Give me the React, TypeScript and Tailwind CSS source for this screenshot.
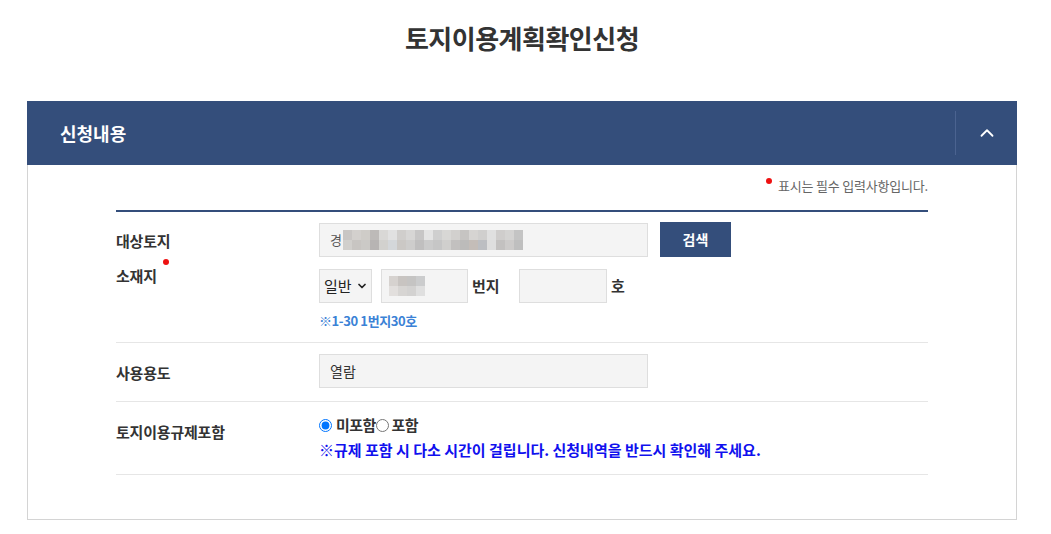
import { ChevronDown, ChevronUp } from 'lucide-react';

const font = { fontFamily: '"Noto Sans CJK KR", "Noto Sans", sans-serif' };

// 개인정보 모자이크 (블러 처리된 주소)
const addrBlocks = [
  ['#c9c6c4', '#d3d0cd', '#cfccc8', '#bdbab8', '#d9d8d6', '#e1e1e1', '#d0cecc', '#d7d6d5', '#c7c6c6', '#e4e4e4', '#cfcfcf', '#d8d7d5', '#d2d0ce', '#c6c4c2', '#d6d4d2', '#d0cfce', '#e0e0e0', '#cfcdcc', '#d4d3d2', '#c4c4c4'],
  ['#d1cfcc', '#c8c5c2', '#cbc9c6', '#b7b4b3', '#d2d1ce', '#d4d7da', '#cbc8c5', '#cecdcc', '#c0bfbf', '#cbcbcb', '#c6c6c6', '#d0cfcd', '#c2c0bf', '#bcbbba', '#c4bdb8', '#bcbec2', '#dedede', '#c3c1c0', '#cdcbca', '#bfbfbf'],
];
const lotBlocks = [
  ['#d6d2cf', '#c8c4c1', '#c5c4c3', '#cbcccd'],
  ['#e2dfdd', '#d7d5d3', '#d3d2d1', '#dfdfdf'],
];

function Mosaic({ rows, size }: { rows: string[][]; size: string }) {
  return (
    <div className="flex flex-col">
      {rows.map((r, i) => (
        <div key={i} className="flex">
          {r.map((c, j) => (
            <div key={j} className={size} style={{ backgroundColor: c }} />
          ))}
        </div>
      ))}
    </div>
  );
}

export default function App() {
  return (
    <div className="min-h-screen bg-white text-[#333]" style={font}>
      {/* Title */}
      <div className="w-[990px] ml-[27px] pt-[20px] pb-[45px] text-center">
        <h1 className="text-[26px] font-bold leading-[36px] tracking-[-0.5px] text-[#333]">토지이용계획확인신청</h1>
      </div>

      <div className="w-[990px] ml-[27px]">
        {/* Header */}
        <div className="h-[64px] bg-[#344e7b] flex items-center justify-between">
          <h2 className="pl-[33px] text-white text-[18px] font-bold">신청내용</h2>
          <div className="h-[44px] w-[62px] border-l border-[#4b6390] flex items-center justify-center">
            <ChevronUp className="w-[22px] h-[22px] text-white" strokeWidth={2} />
          </div>
        </div>

        {/* Body */}
        <div className="border border-t-0 border-[#d4d4d4] h-[355px]">
          <div className="w-[812px] mx-auto">
            <div className="flex justify-end pt-[11px] pb-[14px]">
              <p className="relative text-[13px] leading-[20px] text-[#666] tracking-[-0.2px]">
                <span className="absolute -left-[12px] top-[2px] w-[6px] h-[6px] rounded-full bg-[#ee1111]" />
                표시는 필수 입력사항입니다.
              </p>
            </div>
            <div className="h-[2px] bg-[#344e7b]" />

            {/* 대상토지 소재지 */}
            <div className="flex border-b border-[#e6e6e6] pt-[10px] pb-[11px]">
              <div className="w-[203px] pt-[8px] text-[15px] font-bold leading-[22px] tracking-[-0.2px]">
                <div>대상토지</div>
                <div className="relative mt-[13px]">
                  소재지
                  <span className="absolute left-[47px] -top-[6px] w-[6px] h-[6px] rounded-full bg-[#ee1111]" />
                </div>
              </div>
              <div className="flex flex-col">
                <div className="flex items-center gap-[12px]">
                  <div className="w-[329px] h-[34px] bg-[#f4f4f4] border border-[#dedede] flex items-center pl-[10px] gap-[1px]">
                    <span className="text-[13px] text-[#555]">경</span>
                    <Mosaic rows={addrBlocks} size="w-[9px] h-[10px]" />
                  </div>
                  <button className="w-[71px] h-[35px] bg-[#344e7b] text-white text-[14px] font-bold">검색</button>
                </div>
                <div className="flex items-center mt-[12px]">
                  <div className="w-[53px] h-[34px] border border-[#dedede] bg-[#f4f4f4] flex items-center pl-[4px] gap-[4px]">
                    <span className="text-[15px] text-[#222]">일반</span>
                    <ChevronDown className="w-[12px] h-[12px] text-[#222]" strokeWidth={3.5} />
                  </div>
                  <div className="ml-[9px] w-[87px] h-[34px] border border-[#dedede] bg-[#f4f4f4] flex items-center pl-[7px]">
                    <Mosaic rows={lotBlocks} size="w-[9px] h-[10px]" />
                  </div>
                  <span className="ml-[4px] w-[47px] text-[15px] font-bold">번지</span>
                  <div className="w-[88px] h-[34px] border border-[#dedede] bg-[#f4f4f4]" />
                  <span className="ml-[4px] text-[15px] font-bold">호</span>
                </div>
                <p className="mt-[8px] text-[13px] font-bold leading-[20px] text-[#3b82d6] tracking-[-0.4px]">※1-30 1번지30호</p>
              </div>
            </div>

            {/* 사용용도 */}
            <div className="flex items-center border-b border-[#e6e6e6] pt-[11px] pb-[13px]">
              <div className="w-[203px] pt-[4px] text-[15px] font-bold tracking-[-0.2px]">사용용도</div>
              <div className="w-[329px] h-[34px] bg-[#f4f4f4] border border-[#dedede] flex items-center pl-[10px] text-[14px] text-[#333]">열람</div>
            </div>

            {/* 토지이용규제포함 */}
            <div className="flex border-b border-[#e6e6e6] pt-[12px] pb-[13px]">
              <div className="w-[203px] pt-[7px] text-[15px] font-bold tracking-[-0.2px]">토지이용규제포함</div>
              <div className="flex flex-col">
                <div className="flex items-center text-[15px] font-bold leading-[22px] tracking-[-0.6px]">
                  <input type="radio" name="reg" defaultChecked className="m-0 mr-[4px] w-[13px] h-[13px]" />
                  <span>미포함</span>
                  <input type="radio" name="reg" className="m-0 mr-[3px] w-[13px] h-[13px]" />
                  <span>포함</span>
                </div>
                <p className="mt-[3px] text-[15px] font-bold leading-[22px] text-[#1010ee]">※규제 포함 시 다소 시간이 걸립니다. 신청내역을 반드시 확인해 주세요.</p>
              </div>
            </div>
          </div>
        </div>
      </div>
    </div>
  );
}
